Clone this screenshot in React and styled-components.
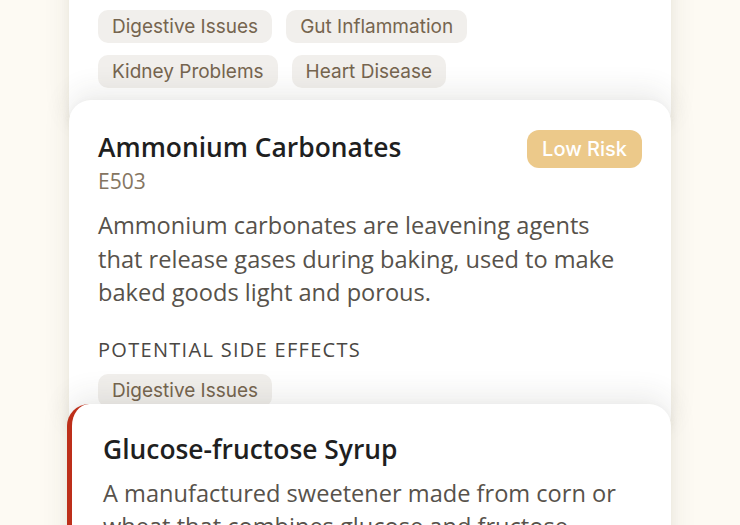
import React from "react";
import styled, { createGlobalStyle } from "styled-components";

const additives = [
  {
    name: "Sodium Nitrite",
    code: "E250",
    risk: "High Risk",
    level: "high",
    lines: ["A preservative used in cured meats to keep colour."],
    effects: ["Digestive Issues", "Gut Inflammation", "Kidney Problems", "Heart Disease"],
    hidden: true,
  },
  {
    name: "Ammonium Carbonates",
    code: "E503",
    risk: "Low Risk",
    level: "low",
    lines: [
      "Ammonium carbonates are leavening agents",
      "that release gases during baking, used to make",
      "baked goods light and porous.",
    ],
    effects: ["Digestive Issues"],
  },
  {
    name: "Glucose-fructose Syrup",
    level: "high",
    lines: [
      "A manufactured sweetener made from corn or",
      "wheat that combines glucose and fructose.",
    ],
    effects: [],
  },
];

const App = () => {
  return (
    <>
      <GlobalStyle />
      <Page>
        <Stack>
          {additives.map((a, i) => (
            <Card key={i} $high={a.level === "high" && i > 0} $first={i === 0}>
              {a.hidden ? (
                <Tags>
                  {a.effects.map((e) => (
                    <Tag key={e}>{e}</Tag>
                  ))}
                </Tags>
              ) : (
                <>
                  <Header>
                    <div>
                      <Title>{a.name}</Title>
                      {a.code && <Code>{a.code}</Code>}
                    </div>
                    {a.risk && <Badge>{a.risk}</Badge>}
                  </Header>
                  <Description $tight={!a.code}>
                    {a.lines.map((l, j) => (
                      <React.Fragment key={j}>
                        {l}
                        {j < a.lines.length - 1 && <br />}
                      </React.Fragment>
                    ))}
                  </Description>
                  {a.effects.length > 0 && (
                    <>
                      <Label>Potential side effects</Label>
                      <Tags>
                        {a.effects.map((e) => (
                          <Tag key={e}>{e}</Tag>
                        ))}
                      </Tags>
                    </>
                  )}
                </>
              )}
            </Card>
          ))}
        </Stack>
      </Page>
    </>
  );
};

const GlobalStyle = createGlobalStyle`
  html, body {
    margin: 0;
    padding: 0;
    background: #fdfaf3;
    overflow: hidden;
  }
  * { box-sizing: border-box; }
`;

const Page = styled.div`
  width: 740px;
  height: 525px;
  overflow: hidden;
  background: #fdfaf3;
  font-family: "Open Sans", "Noto Sans", sans-serif;
`;

const Stack = styled.div`
  width: 602px;
  margin: -52px auto 0;
  display: flex;
  flex-direction: column;
`;

const Card = styled.div`
  position: relative;
  background: #fff;
  border-radius: 22px;
  padding: ${(p) => (p.$first ? "50px 29px 45px" : p.$high ? "26px 29px 30px 31px" : "28px 29px 30px")};
  margin-top: ${(p) => (p.$first ? "0" : "-33px")};
  border-left: ${(p) => (p.$high ? "5px solid #bd2f1a" : "0")};
  margin-left: ${(p) => (p.$high ? "-2px" : "0")};
  box-shadow: 0 -10px 28px rgba(60, 50, 40, 0.09), 0 2px 10px rgba(60, 50, 40, 0.05);
`;

const Header = styled.div`
  display: flex;
  justify-content: space-between;
  align-items: flex-start;
`;

const Title = styled.h2`
  margin: 0;
  font-size: 26.4px;
  line-height: 38px;
  font-weight: 600;
  color: #1f1f1f;
`;

const Code = styled.div`
  font-size: 21px;
  line-height: 30px;
  color: #857561;
`;

const Badge = styled.span`
  margin-top: 2px;
  padding: 8px 15px;
  border-radius: 12px;
  background: #ecc98a;
  color: #fff;
  font-family: Inter, "Liberation Sans", sans-serif;
  font-size: 20px;
  line-height: 22px;
  font-weight: 500;
`;

const Description = styled.p`
  margin: ${(p) => (p.$tight ? "9px" : "13px")} 0 0;
  font-size: 23.6px;
  line-height: 33.5px;
  color: #57524b;
`;

const Label = styled.div`
  margin-top: 28px;
  font-size: 20px;
  line-height: 24px;
  letter-spacing: 1.3px;
  text-transform: uppercase;
  color: #4a4743;
`;

const Tags = styled.div`
  margin-top: 12px;
  display: flex;
  flex-wrap: wrap;
  gap: 12px 14px;
  max-width: 420px;
`;

const Tag = styled.span`
  padding: 6px 14px;
  border-radius: 10px;
  background: #f1efec;
  color: #76654f;
  font-family: Inter, "Liberation Sans", sans-serif;
  font-size: 19px;
  line-height: 21px;
`;

export default App;
